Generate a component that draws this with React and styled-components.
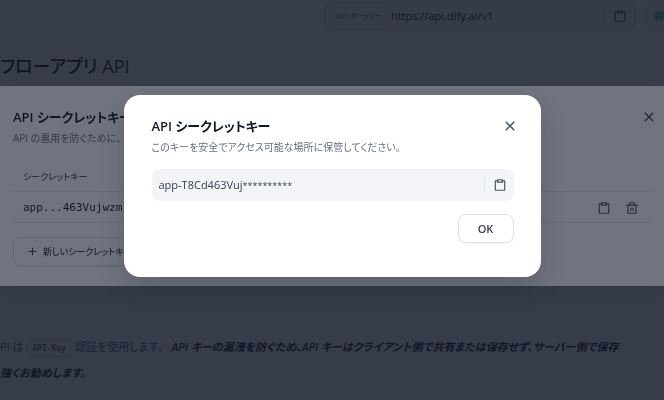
import styled, { createGlobalStyle } from "styled-components";
import { useState } from "react";
import { RiAddLine, RiClipboardLine, RiCloseLine, RiDeleteBinLine } from "react-icons/ri";

const SERVER_URL = "https://api.dify.ai/v1";

export default function App() {
    const [listOpen, setListOpen] = useState(true);
    const [newKey, setNewKey] = useState("app-T8Cd463Vuj");

    return (
        <>
            <GlobalStyle />
            <TopBar>
                <ServerBox>
                    <ServerTag>API サーバー</ServerTag>
                    <ServerUrl>{SERVER_URL}</ServerUrl>
                    <Divider />
                    <IconButton aria-label="コピー"><RiClipboardLine size={14} /></IconButton>
                </ServerBox>
                <Status>稼</Status>
            </TopBar>
            <Doc>
                <DocTitle>フローアプリ API</DocTitle>
                <DocText>
                    PI は <Code>API-Key</Code> 認証を使用します。{" "}
                    <em>
                        API キーの漏洩を防ぐため、API キーはクライアント側で共有または保存せず、サーバー側で保存
                        <br />
                    </em>
                    <em>強くお勧めします。</em>
                </DocText>
            </Doc>

            {listOpen && (
                <Overlay>
                    <ListPanel role="dialog" aria-label="API シークレットキー一覧">
                        <PanelHeader>
                            <Title>API シークレットキー</Title>
                            <IconButton aria-label="閉じる" onClick={() => setListOpen(false)}>
                                <RiCloseLine size={18} />
                            </IconButton>
                        </PanelHeader>
                        <Description>API の悪用を防ぐために、</Description>
                        <KeyTable>
                            <thead>
                                <tr>
                                    <th>シークレットキー</th>
                                    <th aria-label="操作" />
                                </tr>
                            </thead>
                            <tbody>
                                <tr>
                                    <KeyCell>app...463Vujwzm</KeyCell>
                                    <td>
                                        <Actions>
                                            <IconButton aria-label="コピー"><RiClipboardLine size={14} /></IconButton>
                                            <IconButton aria-label="削除"><RiDeleteBinLine size={14} /></IconButton>
                                        </Actions>
                                    </td>
                                </tr>
                            </tbody>
                        </KeyTable>
                        <CreateButton>
                            <RiAddLine size={13} />
                            新しいシークレットキー
                        </CreateButton>
                    </ListPanel>
                </Overlay>
            )}

            {newKey && (
                <Overlay>
                    <KeyModal role="dialog" aria-label="API シークレットキー">
                        <PanelHeader>
                            <Title>API シークレットキー</Title>
                            <IconButton aria-label="閉じる" onClick={() => setNewKey(null)}>
                                <RiCloseLine size={18} />
                            </IconButton>
                        </PanelHeader>
                        <Description>このキーを安全でアクセス可能な場所に保管してください。</Description>
                        <KeyBox>
                            <KeyValue>{newKey}<Mask>**********</Mask></KeyValue>
                            <Divider />
                            <IconButton aria-label="コピー"><RiClipboardLine size={14} /></IconButton>
                        </KeyBox>
                        <Footer>
                            <Button onClick={() => setNewKey(null)}>OK</Button>
                        </Footer>
                    </KeyModal>
                </Overlay>
            )}
        </>
    );
}

const GlobalStyle = createGlobalStyle`
* {
    box-sizing: border-box;
}
body {
    margin: 0;
    overflow: hidden;
    background-color: #FFFFFF;
    color: #354052;
    font-family: "Open Sans", "Noto Sans CJK JP", sans-serif;
    font-size: 11px;
    line-height: 16px;
    font-feature-settings: "palt";
}
button {
    font: inherit;
    font-feature-settings: inherit;
    color: inherit;
    cursor: pointer;
}
`

const TopBar = styled.header`
display: flex;
justify-content: flex-end;
gap: 6px;
height: 37px;
padding: 2px 0 6px;
border-bottom: 1px solid #EAECF0;
`

const ServerBox = styled.div`
display: flex;
align-items: center;
width: 312px;
height: 28px;
padding: 0 8px 0 5px;
border: 1px solid #E4E7EC;
border-radius: 8px;
background-color: #F2F4F7;
`

const ServerTag = styled.span`
padding: 0 5px;
border: 1px solid #E9EBF0;
border-radius: 4px;
font-size: 8px;
color: #676F83;
`

const ServerUrl = styled.span`
flex: 1;
padding-left: 4px;
font-weight: 500;
color: #101828;
`

const Status = styled.span`
display: flex;
align-items: center;
width: 22px;
padding-left: 12px;
border-radius: 8px 0 0 8px;
background-color: #F2F4F7;
font-size: 10px;
font-weight: 600;
color: #17B26A;
`

const Doc = styled.main`
padding-top: 13px;
`

const DocTitle = styled.h1`
margin: 0;
font-size: 18px;
font-weight: 500;
line-height: 32px;
color: #101828;
`

const DocText = styled.p`
margin: 252px 0 0;
line-height: 26px;
white-space: nowrap;
color: #495464;

em {
    font-weight: 600;
    color: #101828;
}
em:first-of-type {
    margin-left: 6px;
}
`

const Code = styled.code`
padding: 3px 4px;
margin: 0 1px;
border: 1px solid #D0D5DD;
border-radius: 5px;
font-family: "DejaVu Sans Mono", monospace;
font-size: 8px;
line-height: 1;
color: #101828;
`

const Overlay = styled.div`
position: fixed;
inset: 0;
display: flex;
align-items: center;
justify-content: center;
padding-bottom: 28px;
background-color: rgba(16, 24, 40, 0.6);
`

const ListPanel = styled.section`
width: 100%;
padding: 21px 11px 20px 13px;
background-color: #FFFFFF;
box-shadow: 0 8px 24px rgba(16, 24, 40, 0.1);
`

const KeyModal = styled.section`
width: 417px;
padding: 21px 27px 34px 28px;
border-radius: 16px;
background-color: #FFFFFF;
box-shadow: 0 12px 24px rgba(16, 24, 40, 0.2);
`

const PanelHeader = styled.div`
display: flex;
align-items: center;
justify-content: space-between;
margin-right: -5px;
`

const Title = styled.h2`
margin: 0;
font-size: 13px;
font-weight: 600;
line-height: 20px;
color: #101828;
`

const Description = styled.p`
margin: 3px 0 0;
font-size: 10px;
line-height: 16px;
color: #676F83;
`

const IconButton = styled.button`
display: flex;
padding: 0;
border: none;
background: none;
color: #495464;
`

const Divider = styled.span`
width: 1px;
height: 14px;
margin-right: 8px;
background-color: #DDE1E8;
`

const KeyTable = styled.table`
width: 100%;
margin-top: 15px;
border-collapse: collapse;

th {
    height: 31px;
    padding: 1px 10px 0;
    border-bottom: 1px solid #E4E7EC;
    font-size: 9px;
    font-weight: 500;
    text-align: left;
    color: #495464;
}
td {
    height: 31px;
    padding: 2px 14px 0;
    border-bottom: 1px solid #E4E7EC;
}
`

const KeyCell = styled.td`
&& {
    padding: 2px 10px 0;
    font-family: "DejaVu Sans Mono", monospace;
    font-size: 11px;
    color: #101828;
}
`

const Actions = styled.div`
display: flex;
justify-content: flex-end;
gap: 14px;
`

const KeyBox = styled.div`
display: flex;
align-items: center;
height: 32px;
margin-top: 14px;
padding: 0 7px;
border-radius: 8px;
background-color: #F2F4F7;
`

const KeyValue = styled.span`
flex: 1;
`

const Mask = styled.span`
font-size: 9px;
`

const Footer = styled.div`
display: flex;
justify-content: flex-end;
margin-top: 13px;
`

const Button = styled.button`
display: flex;
align-items: center;
justify-content: center;
gap: 4px;
min-width: 56px;
height: 29px;
padding: 0 12px;
border: 1px solid #DFE2E8;
border-radius: 8px;
background-color: #FFFFFF;
box-shadow: 0 1px 2px rgba(16, 24, 40, 0.05);
font-weight: 600;
`

const CreateButton = styled(Button)`
margin-top: 14px;
font-size: 9px;
font-weight: 500;
`
